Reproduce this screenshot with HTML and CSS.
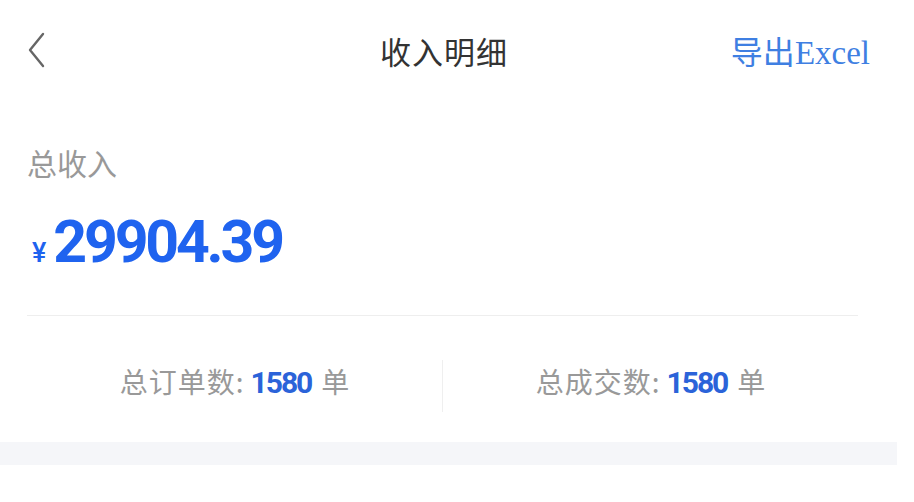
FILE: index.html
```html
<!DOCTYPE html>
<html lang="zh">
<head>
<meta charset="utf-8">
<title>收入明细</title>
<link rel="stylesheet" href="styles.css">
</head>
<body>
<div class="page">
  <header class="topbar">
    <div class="back">
      <svg width="20" height="36" viewBox="0 0 20 36" aria-hidden="true">
        <polyline points="15,2 2,18 15,34" fill="none" stroke="#666" stroke-width="2.4" stroke-linecap="round" stroke-linejoin="round"/>
      </svg>
    </div>
    <h1 class="title">收入明细</h1>
    <div class="export"><span class="cjk">导出</span><span class="latin">Excel</span></div>
  </header>

  <section class="summary">
    <div class="label">总收入</div>
    <div class="amount"><span class="yen">¥</span><span class="num">29904.39</span></div>
  </section>

  <section class="stats">
    <div class="stat"><span class="k">总订单数:</span><span class="v">1580</span><span class="u">单</span></div>
    <div class="vline"></div>
    <div class="stat"><span class="k">总成交数:</span><span class="v">1580</span><span class="u">单</span></div>
  </section>

  <div class="band"></div>
</div>
</body>
</html>
```

FILE: styles.css
```css
html, body {
  margin: 0;
  padding: 0;
  background: #ffffff;
}
body {
  font-family: "Noto Sans CJK SC", "Noto Sans", sans-serif;
}
.page {
  width: 897px;
}
.topbar {
  height: 100px;
  display: grid;
  grid-template-columns: 1fr auto 1fr;
  align-items: center;
  padding: 0 27px 0 28px;
}
.back {
  display: flex;
  align-items: center;
  height: 36px;
}
.back svg {
  display: block;
}
.title {
  margin: 0 10px 0 0;
  font-size: 31px;
  font-weight: 400;
  color: #333333;
  letter-spacing: 1px;
}
.export {
  justify-self: end;
  color: #3f7fe2;
  display: flex;
  align-items: baseline;
}
.export .cjk {
  font-family: "Noto Sans CJK SC", sans-serif;
  font-size: 32px;
}
.export .latin {
  font-family: "Liberation Serif", serif;
  font-size: 33px;
}
.summary {
  margin: 0 39px 0 27px;
  padding-top: 42px;
  border-bottom: 1px solid #eeeeee;
  height: 216px;
  box-sizing: border-box;
}
.label {
  font-size: 30px;
  line-height: 40px;
  color: #999999;
}
.amount {
  margin-top: 25px;
  height: 70px;
  line-height: 70px;
  color: #1f63ef;
  font-family: Roboto, "Liberation Sans", sans-serif;
  display: flex;
  align-items: baseline;
}
.yen {
  font-size: 27px;
  font-weight: 500;
  margin-left: 5px;
  margin-right: 7px;
}
.num {
  font-size: 59px;
  font-weight: 700;
  letter-spacing: -3.2px;
}
.stats {
  margin: 0 39px 0 27px;
  padding: 44px 0 30px;
  display: flex;
  align-items: center;
}
.stat {
  flex: 1;
  height: 52px;
  display: flex;
  justify-content: center;
  align-items: baseline;
  line-height: 42px;
}
.k {
  font-size: 28px;
  color: #999999;
  letter-spacing: 1px;
}
.v {
  font-family: Roboto, "Liberation Sans", sans-serif;
  font-size: 30px;
  font-weight: 700;
  color: #2b63d9;
  letter-spacing: -2px;
  margin: 0 10px 0 6px;
}
.u {
  font-size: 28px;
  color: #999999;
}
.vline {
  width: 1px;
  height: 52px;
  background: #efefef;
}
.band {
  height: 23px;
  background: #f5f6f9;
}
```
